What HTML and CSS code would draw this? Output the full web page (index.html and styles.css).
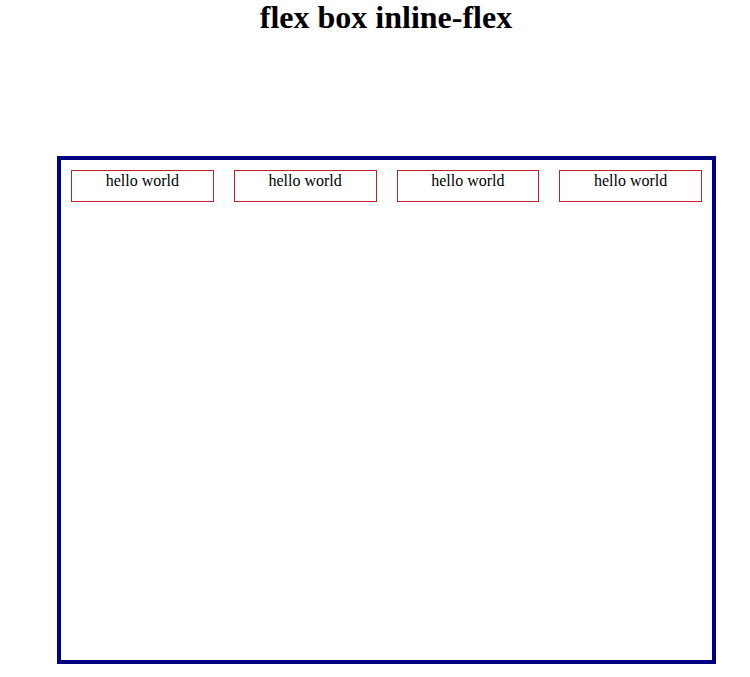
FILE: index.html
```html
<!DOCTYPE html>
<html>
<head>
<meta charset="utf-8">
<link rel="stylesheet" href="styles.css">
</head>
<body>
<h1 class="title">flex box inline-flex</h1>
<div class="box">
  <div class="item">hello world</div>
  <div class="item">hello world</div>
  <div class="item">hello world</div>
  <div class="item">hello world</div>
</div>
</body>
</html>
```
FILE: styles.css
```css
body {
  margin: 0;
  font-family: "Liberation Serif", "Times New Roman", serif;
  background: #fff;
  color: #000;
}
.title {
  margin: 0;
  padding-left: 22px;
  font-size: 32px;
  line-height: 35px;
  text-align: center;
  font-weight: bold;
}
.box {
  display: flex;
  align-items: flex-start;
  margin: 121px 0 0 57px;
  width: 651px;
  height: 500px;
  border: 4px solid #000080;
}
.item {
  flex: 1;
  margin: 10px;
  height: 30px;
  border: 1px solid #c0202a;
  font-size: 16px;
  line-height: 20px;
  text-align: center;
}
```
